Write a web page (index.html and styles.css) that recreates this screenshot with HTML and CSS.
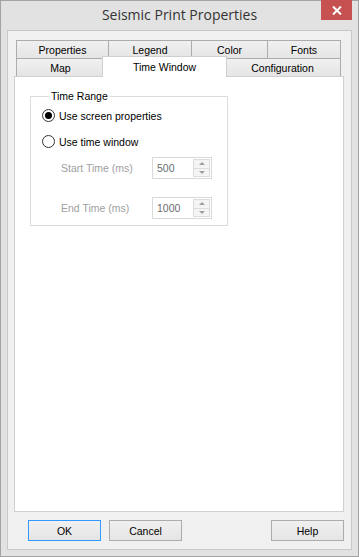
FILE: index.html
```html
<!DOCTYPE html>
<html>
<head>
<meta charset="utf-8">
<link rel="stylesheet" href="styles.css">
</head>
<body>
<div class="window">
  <div class="titlebar">
    <span></span>
    <span class="title">Seismic Print Properties</span>
    <div class="close-wrap">
      <div class="close">
        <svg width="10" height="9" viewBox="0 0 10 9"><path d="M1 0.5 L9 8.5 M9 0.5 L1 8.5" stroke="#fff" stroke-width="2"/></svg>
      </div>
    </div>
  </div>
  <div class="client">
    <div class="tabs">
      <div class="tabrow">
        <div class="tab w-prop">Properties</div>
        <div class="tab w-leg">Legend</div>
        <div class="tab w-col">Color</div>
        <div class="tab w-font">Fonts</div>
      </div>
      <div class="tabrow">
        <div class="tab w-map">Map</div>
        <div class="tab active w-tw">Time Window</div>
        <div class="tab w-conf">Configuration</div>
      </div>
    </div>
    <div class="panel">
      <fieldset class="group">
        <legend>Time Range</legend>
        <div class="radio-row"><span class="radio checked"></span><span>Use screen properties</span></div>
        <div class="radio-row last"><span class="radio"></span><span>Use time window</span></div>
        <div class="field-row">
          <span class="label">Start Time (ms)</span>
          <div class="spin"><span class="value">500</span><div class="spin-btns"><div class="sb"><span class="up"></span></div><div class="sb"><span class="down"></span></div></div></div>
        </div>
        <div class="field-row">
          <span class="label">End Time (ms)</span>
          <div class="spin"><span class="value">1000</span><div class="spin-btns"><div class="sb"><span class="up"></span></div><div class="sb"><span class="down"></span></div></div></div>
        </div>
      </fieldset>
    </div>
    <div class="buttons">
      <div class="btn default">OK</div>
      <div class="btn">Cancel</div>
      <div class="spacer"></div>
      <div class="btn">Help</div>
    </div>
  </div>
</div>
</body>
</html>
```

FILE: styles.css
```css
* { box-sizing: border-box; }
html, body { margin: 0; padding: 0; background: #ffffff; }
body { font-family: "Liberation Sans", Arial, sans-serif; font-size: 10.5px; color: #000; }

.window {
  width: 359px;
  height: 557px;
  border: 1px solid #a3a3a3;
  background: #e2e2e2;
  display: flex;
  flex-direction: column;
}

.titlebar {
  height: 29px;
  display: grid;
  grid-template-columns: 1fr auto 1fr;
  align-items: start;
}
.title {
  font-family: "Open Sans", "Noto Sans", sans-serif;
  font-size: 14px;
  color: #333;
  line-height: 28px;
  white-space: nowrap;
}
.close-wrap { display: flex; justify-content: flex-end; padding-right: 6px; }
.close {
  width: 31px;
  height: 20px;
  margin-top: -1px;
  background: #c75050;
  display: flex;
  align-items: center;
  justify-content: center;
}

.client {
  flex: 1;
  margin: 0 6px 6px 6px;
  border: 1px solid #c8c8c8;
  background: #f0f0f0;
  padding: 9px 7px 8px 6px;
  display: flex;
  flex-direction: column;
}

.tabs { margin-left: 2px; }
.tabrow { display: flex; height: 18px; }
.tab {
  height: 18px;
  border: 1px solid #acacac;
  border-bottom: none;
  background: linear-gradient(#f0f0f0, #e5e5e5);
  display: flex;
  align-items: center;
  justify-content: center;
  margin-left: -1px;
  white-space: nowrap;
}
.tab:first-child { margin-left: 0; }
.w-prop { width: 93px; }
.w-leg { width: 84px; }
.w-col { width: 77px; }
.w-font { width: 74px; }
.w-map { width: 89px; }
.w-tw { width: 125px; }
.w-conf { width: 117px; }
.tab.active {
  height: 21px;
  margin: -2px -2px -1px -3px;
  background: #ffffff;
  border-color: #d0d0d0;
  position: relative;
  z-index: 1;
  padding-bottom: 1px;
}
.tab.active + .tab { margin-left: -1px; }

.panel {
  height: 436px;
  background: #ffffff;
  border: 1px solid #d0d0d0;
  padding: 13px 0 0 15px;
}

.group {
  width: 198px;
  height: 136px;
  margin: 0;
  padding: 6px 0 0 11px;
  border: 1px solid #dcdcdc;
}
.group legend {
  padding: 0 2px;
  margin-left: 7px;
  line-height: 13px;
}

.radio-row {
  display: flex;
  align-items: center;
  gap: 4px;
  height: 13px;
  margin-bottom: 13px;
}
.radio-row.last { margin-bottom: 9px; }
.radio {
  width: 13px;
  height: 13px;
  border-radius: 50%;
  border: 1px solid #333;
  background: #fff;
  display: flex;
  align-items: center;
  justify-content: center;
}
.radio.checked::after {
  content: "";
  width: 7px;
  height: 7px;
  border-radius: 50%;
  background: #000;
}

.field-row {
  display: flex;
  align-items: center;
  height: 22px;
  margin-bottom: 18px;
  padding-left: 19px;
}
.label { width: 91px; color: #a0a0a0; }
.spin {
  width: 60px;
  height: 22px;
  border: 1px solid #d9d9d9;
  background: #fff;
  display: flex;
  align-items: center;
  padding: 1px;
}
.value { flex: 1; color: #6d6d6d; padding-left: 3px; }
.spin-btns { width: 17px; height: 18px; display: flex; flex-direction: column; }
.sb {
  flex: 1;
  border: 1px solid #dcdcdc;
  background: #f4f4f4;
  display: flex;
  align-items: center;
  justify-content: center;
}
.sb + .sb { border-top: none; }
.up { width: 0; height: 0; border-left: 3px solid transparent; border-right: 3px solid transparent; border-bottom: 3px solid #a0a0a0; }
.down { width: 0; height: 0; border-left: 3px solid transparent; border-right: 3px solid transparent; border-top: 3px solid #a0a0a0; }

.buttons {
  display: flex;
  margin-top: 8px;
  padding-left: 14px;
}
.btn {
  width: 73px;
  height: 21px;
  border: 1px solid #acacac;
  background: linear-gradient(#f0f0f0, #e5e5e5);
  display: flex;
  align-items: center;
  justify-content: center;
  margin-right: 8px;
}
.btn.default { border-color: #3399ff; }
.spacer { flex: 1; }
.buttons .btn:last-child { margin-right: 0; }
```
